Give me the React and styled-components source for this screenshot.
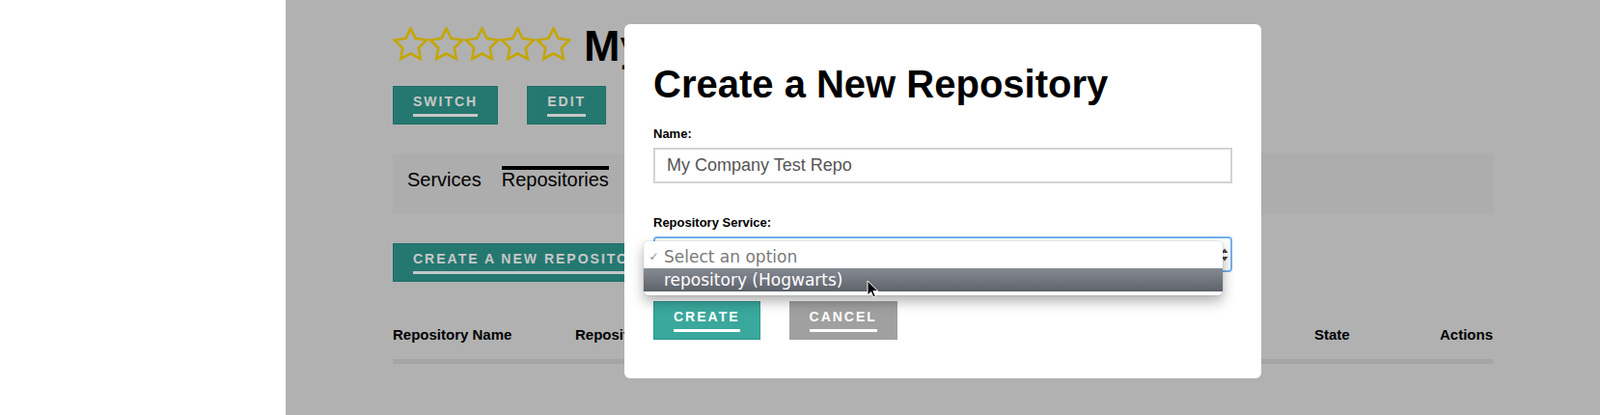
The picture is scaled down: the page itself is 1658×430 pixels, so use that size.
import React from 'react';
import styled, { createGlobalStyle } from 'styled-components';

const GlobalStyle = createGlobalStyle`
  html, body {
    margin: 0;
    padding: 0;
  }
  body {
    font-family: "Liberation Sans", Arial, sans-serif;
    background: #fff;
    color: #000;
  }
`;

const Layout = styled.div`
  display: flex;
  min-height: 430px;
`;

const Sidebar = styled.aside`
  width: 296px;
  flex-shrink: 0;
  background: #fff;
`;

const Main = styled.main`
  position: relative;
  flex: 1;
  background: #e3e3e3;
  overflow: hidden;
`;

const Container = styled.div`
  display: flex;
  flex-direction: column;
  align-items: flex-start;
  max-width: 1140px;
  margin: 0 auto;
  padding-top: 28px;
`;

const TitleRow = styled.div`
  display: flex;
  align-items: flex-start;
`;

const Stars = styled.div`
  display: flex;
  margin-right: 13px;
`;

const Title = styled.h1`
  margin: 1px 0 0;
  font-size: 45px;
  line-height: 38px;
  font-weight: 700;
  white-space: nowrap;
`;

const ButtonRow = styled.div`
  display: flex;
  gap: 30px;
  margin-top: 22px;
`;

const Button = styled.button`
  appearance: none;
  display: inline-flex;
  align-items: flex-start;
  margin: 0;
  padding: 7px 20px;
  border: 1px solid ${(p) => p.$border};
  background: ${(p) => p.$bg};
  color: #fff;
  font-family: inherit;
  font-size: 14px;
  font-weight: 700;
  letter-spacing: 2px;
  text-transform: uppercase;
  line-height: 16px;
  white-space: nowrap;
  cursor: pointer;
  outline: none;
`;

const ButtonLabel = styled.span`
  display: inline-block;
  line-height: 16px;
  padding-bottom: 5px;
  border-bottom: 3px solid currentColor;
`;

const Tabs = styled.nav`
  display: flex;
  gap: 21px;
  align-self: stretch;
  margin-top: 30px;
  padding: 13px 15px 26px;
  background: #dedede;
`;

const Tab = styled.div`
  border-top: 4px solid ${(p) => (p.$active ? '#000' : 'transparent')};
  font-size: 20px;
  line-height: 20px;
`;

const CreateButtonWrap = styled.div`
  margin-top: 30px;
`;

const TableHead = styled.div`
  display: grid;
  grid-template-columns: 189px 766px 1fr auto;
  align-self: stretch;
  margin-top: 45px;
  padding-bottom: 15px;
  border-bottom: 5px solid #d4d4d4;
  font-size: 15px;
  font-weight: 700;
  line-height: 20px;
  white-space: nowrap;
`;

const Overlay = styled.div`
  position: absolute;
  inset: 0;
  background: rgba(0, 0, 0, 0.22);
`;

const Modal = styled.div`
  position: absolute;
  top: 25px;
  left: 50%;
  width: 660px;
  margin-left: -330px;
  box-sizing: border-box;
  padding: 43px 30px 40px;
  background: #fff;
  border-radius: 6px;
`;

const ModalTitle = styled.h2`
  margin: 0 0 25px;
  font-size: 40px;
  line-height: 38px;
  font-weight: 700;
`;

const Field = styled.div`
  margin-bottom: ${(p) => p.$gap || 0}px;
`;

const Label = styled.label`
  display: block;
  margin-bottom: 6px;
  font-size: 13px;
  font-weight: 700;
  line-height: 16px;
`;

const Input = styled.input`
  display: block;
  width: 100%;
  height: 37px;
  box-sizing: border-box;
  margin: 0;
  padding: 0 12px;
  border: 2px solid #d3d3d3;
  border-radius: 0;
  font-family: inherit;
  font-size: 18px;
  color: #555;
  outline: none;
`;

const SelectBox = styled.div`
  position: relative;
  display: flex;
  align-items: center;
  justify-content: flex-end;
  height: 37px;
  box-sizing: border-box;
  padding-right: 2px;
  border: 2px solid #74b2ee;
  border-radius: 4px;
  background: #fff;
`;

const Popup = styled.ul`
  position: absolute;
  top: 3px;
  left: -12px;
  width: 600px;
  margin: 0;
  padding: 0 0 4px;
  list-style: none;
  background: #fff;
  border-radius: 5px;
  box-shadow: 0 0 0 1px rgba(0, 0, 0, 0.06), 0 6px 14px rgba(0, 0, 0, 0.32);
  font-family: "DejaVu Sans", Verdana, sans-serif;
  font-size: 17px;
  z-index: 2;
`;

const Option = styled.li`
  position: relative;
  display: flex;
  height: ${(p) => (p.$active ? 24 : 28)}px;
  box-sizing: border-box;
  padding-top: ${(p) => (p.$active ? 0 : 3)}px;
  line-height: ${(p) => (p.$active ? 24 : 26)}px;
  color: ${(p) => (p.$active ? '#fff' : '#7a7a7a')};
  background: ${(p) =>
    p.$active ? 'linear-gradient(#868a93, #5d626b)' : 'transparent'};
`;

const Check = styled.span`
  width: 21px;
  flex-shrink: 0;
  text-align: center;
  font-size: 12px;
  color: #8a8a8a;
`;

const Pointer = styled.svg`
  position: absolute;
  left: 231px;
  top: 12px;
`;

const Actions = styled.div`
  display: flex;
  gap: 30px;
  margin-top: 30px;
`;

const Star = () => (
  <svg width="37" height="35" viewBox="1.3 1.4 21.4 20.3">
    <path
      d="M12 2.2l2.95 6.1 6.65.95-4.8 4.7 1.15 6.6L12 17.4l-5.95 3.15 1.15-6.6-4.8-4.7 6.65-.95z"
      fill="none"
      stroke="#fbd500"
      strokeWidth="1.5"
      strokeLinejoin="miter"
    />
  </svg>
);

const SelectArrows = () => (
  <svg width="8" height="14" viewBox="0 0 8 14">
    <path d="M4 0.5L7.5 5H0.5z" fill="#444" />
    <path d="M4 13.5L7.5 9H0.5z" fill="#444" />
  </svg>
);

const App = () => {
  const teal = { $bg: '#2f9a90', $border: '#2a8c83' };

  return (
    <Layout>
      <GlobalStyle />
      <Sidebar />
      <Main>
        <Container>
          <TitleRow>
            <Stars>
              {[0, 1, 2, 3, 4].map((i) => (
                <Star key={i} />
              ))}
            </Stars>
            <Title>My</Title>
          </TitleRow>
          <ButtonRow>
            <Button {...teal}>
              <ButtonLabel>Switch</ButtonLabel>
            </Button>
            <Button {...teal}>
              <ButtonLabel>Edit</ButtonLabel>
            </Button>
          </ButtonRow>
          <Tabs>
            <Tab>Services</Tab>
            <Tab $active>Repositories</Tab>
          </Tabs>
          <CreateButtonWrap>
            <Button {...teal}>
              <ButtonLabel>Create a new repository</ButtonLabel>
            </Button>
          </CreateButtonWrap>
          <TableHead>
            <span>Repository Name</span>
            <span>Repository Service</span>
            <span>State</span>
            <span>Actions</span>
          </TableHead>
        </Container>
        <Overlay />
        <Modal>
          <ModalTitle>Create a New Repository</ModalTitle>
          <Field $gap={33}>
            <Label>Name:</Label>
            <Input defaultValue="My Company Test Repo" />
          </Field>
          <Field>
            <Label>Repository Service:</Label>
            <SelectBox>
              <SelectArrows />
              <Popup>
                <Option>
                  <Check>✓</Check>
                  Select an option
                </Option>
                <Option $active>
                  <Check />
                  repository (Hogwarts)
                  <Pointer width="13" height="19" viewBox="0 0 13 19">
                    <path
                      d="M1 1v15l3.6-3.5 2.4 5.6 2.3-1-2.4-5.5H12z"
                      fill="#000"
                      stroke="#fff"
                      strokeWidth="1"
                      strokeLinejoin="round"
                    />
                  </Pointer>
                </Option>
              </Popup>
            </SelectBox>
          </Field>
          <Actions>
            <Button $bg="#3aa89d" $border="#2f958b">
              <ButtonLabel>Create</ButtonLabel>
            </Button>
            <Button $bg="#a0a0a0" $border="#a0a0a0">
              <ButtonLabel>Cancel</ButtonLabel>
            </Button>
          </Actions>
        </Modal>
      </Main>
    </Layout>
  );
};

export default App;
